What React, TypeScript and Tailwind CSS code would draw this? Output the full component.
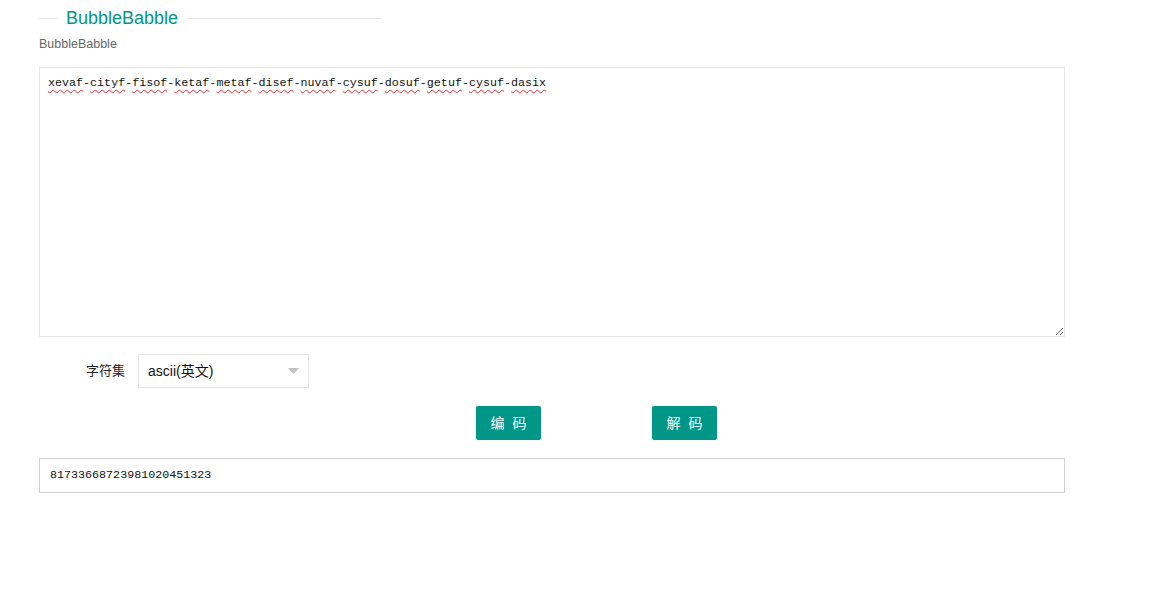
const words = [
  "xevaf",
  "cityf",
  "fisof",
  "ketaf",
  "metaf",
  "disef",
  "nuvaf",
  "cysuf",
  "dosuf",
  "getuf",
  "cysuf",
  "dasix",
];

const mono = "font-['Liberation_Mono','DejaVu_Sans_Mono',monospace]";
const sans = "font-['Liberation_Sans','Noto_Sans_CJK_SC',sans-serif]";

export default function App() {
  return (
    <div className={`min-h-[598px] w-[1150px] bg-white px-[39px] pt-[8px] ${sans}`}>
      {/* fieldset legend */}
      <div className="flex h-[20px] w-[343px] items-center">
        <div className="h-px w-[18px] bg-[#e6e6e6]" />
        <span className="px-[9px] text-[18px] leading-[20px] text-[#009688]">BubbleBabble</span>
        <div className="h-px flex-1 bg-[#e6e6e6]" />
      </div>

      <div className="mt-[6px] text-[12.5px] leading-[20px] text-[#666]">BubbleBabble</div>

      {/* input area */}
      <div
        className={`mt-[13px] h-[270px] w-[1026px] resize-y overflow-auto border border-[#e6e6e6] px-[8px] pt-[6px] text-[11.7px] leading-[18px] text-[#111] ${mono}`}
      >
        {words.map((w, i) => (
          <span key={i}>
            <span className="underline decoration-red-500 decoration-wavy decoration-1 underline-offset-[3px]">
              {w}
            </span>
            {i < words.length - 1 ? "-" : ""}
          </span>
        ))}
      </div>

      {/* charset */}
      <div className="mt-[17px] flex items-center">
        <label className="w-[86px] text-right text-[13px] text-[#222]">字符集</label>
        <div className="ml-[13px] flex h-[34px] w-[171px] items-center justify-between border border-[#e6e6e6] pl-[9px] pr-[9px]">
          <span className="text-[14px] text-[#111]">ascii(英文)</span>
          <svg width="11" height="6" viewBox="0 0 11 6">
            <path d="M0 0h11L5.5 6z" fill="#c2c2c2" />
          </svg>
        </div>
      </div>

      {/* actions */}
      <div className="mt-[18px] flex gap-[111px] pl-[437px]">
        <button className="h-[34px] w-[65px] rounded-[2px] bg-[#009688] pl-[2px] text-[14px] tracking-[2px] text-white">
          编 码
        </button>
        <button className="h-[34px] w-[65px] rounded-[2px] bg-[#009688] pl-[2px] text-[14px] tracking-[2px] text-white">
          解 码
        </button>
      </div>

      {/* output */}
      <div
        className={`mt-[18px] flex h-[35px] w-[1026px] items-center border border-[#d2d2d2] px-[10px] text-[11.7px] text-[#111] ${mono}`}
      >
        81733668723981020451323
      </div>
    </div>
  );
}
